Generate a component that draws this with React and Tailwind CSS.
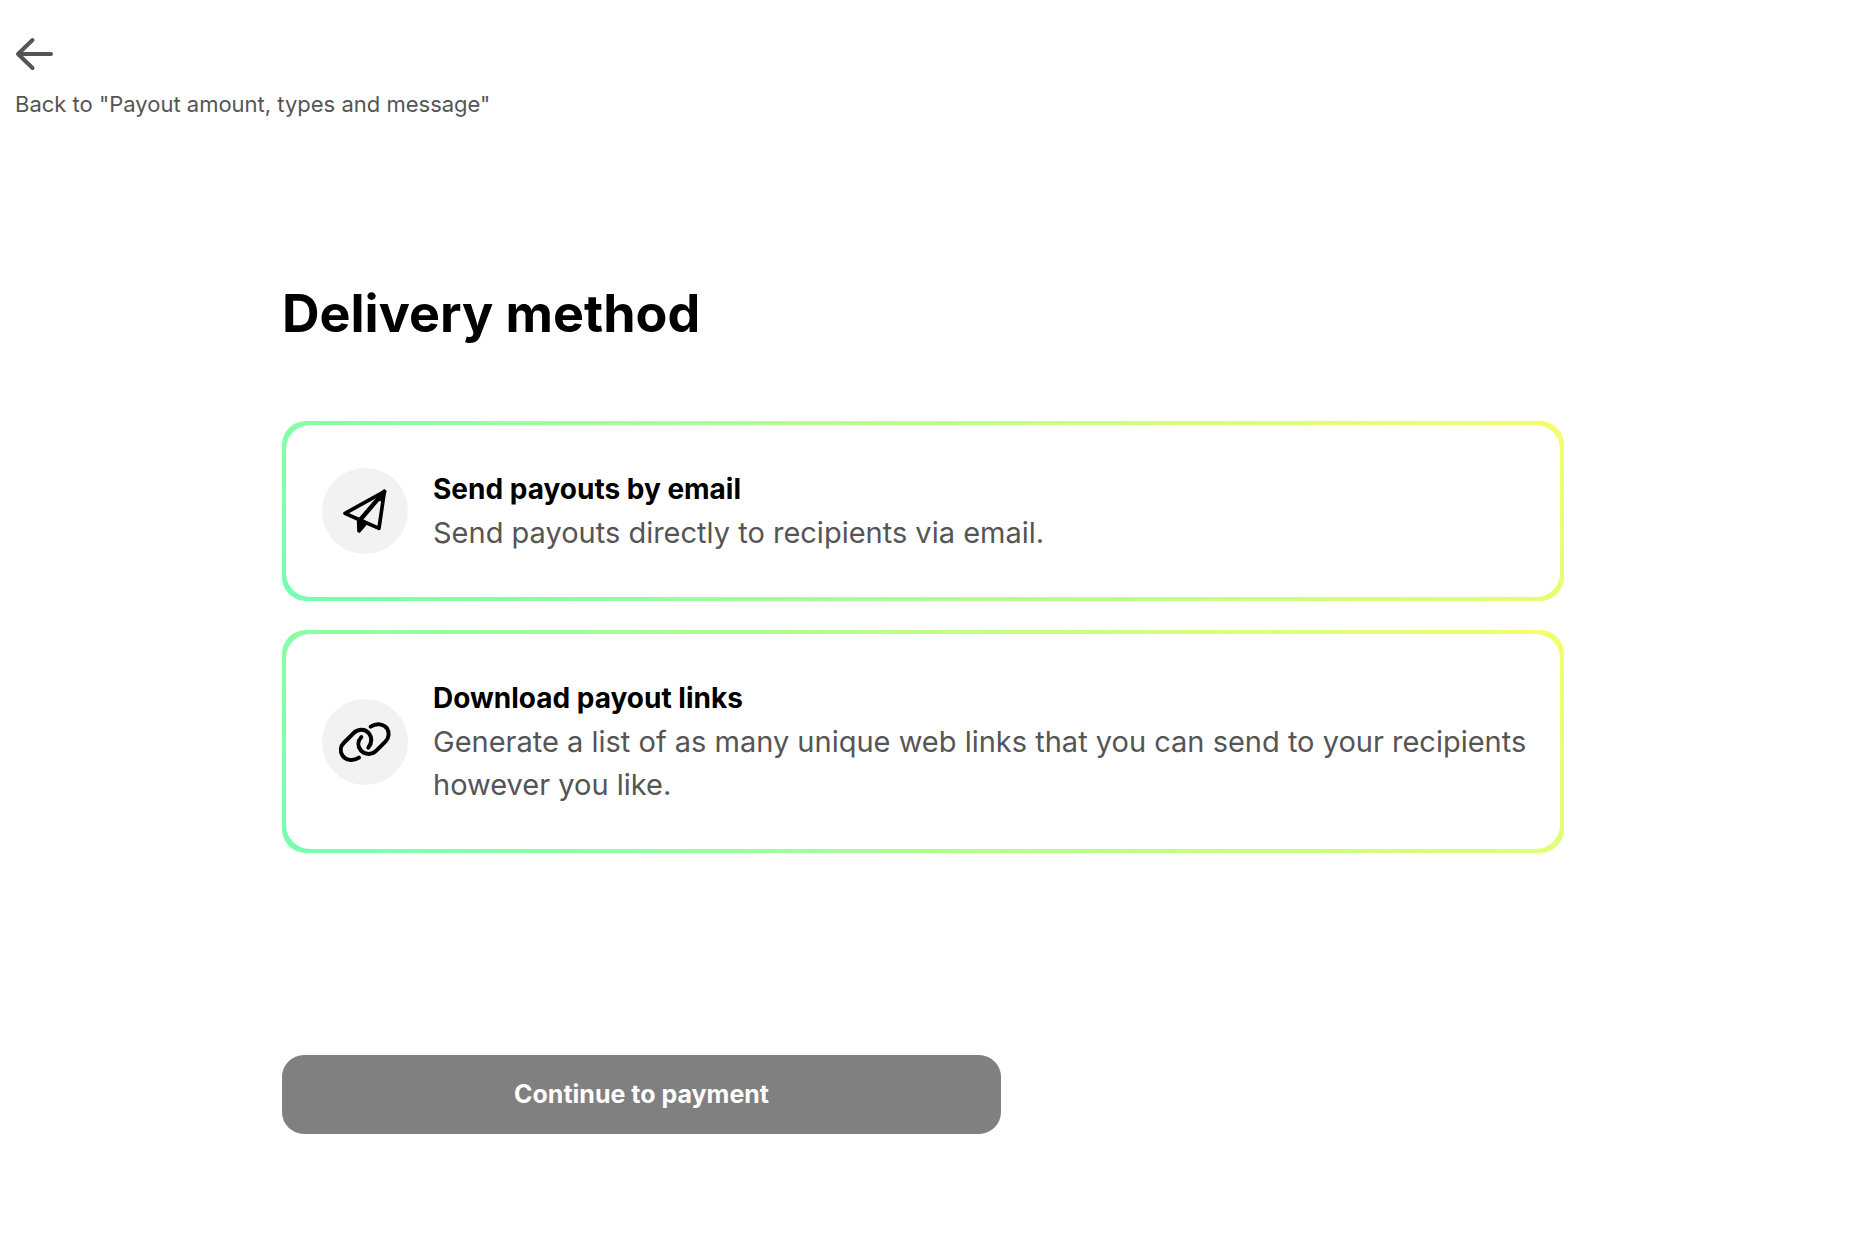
function ArrowLeftIcon() {
  return (
    <svg viewBox="0 0 38 34" className="h-[34px] w-[38px]" fill="none" stroke="currentColor" strokeWidth="4" strokeLinecap="round" strokeLinejoin="round" aria-hidden="true">
      <path d="M36 17H3M17.5 3L3 17L17.5 31" />
    </svg>
  );
}

function PlaneIcon() {
  return (
    <svg viewBox="37 24 258 258" className="size-full" fill="none" stroke="currentColor" strokeWidth="11" strokeLinecap="round" strokeLinejoin="round" aria-hidden="true">
      <path d="M106 160L224 95L208 205L151 180Z" />
      <path d="M224 95L151 180" strokeWidth="13" />
      <path d="M222 98L212 118L207 108Z" fill="currentColor" />
      <path d="M147 183L148 213L168 190Z" fill="currentColor" />
    </svg>
  );
}

function LinkIcon() {
  return (
    <svg viewBox="37 24 258 258" className="size-full" fill="none" stroke="currentColor" strokeWidth="12" strokeLinecap="round" strokeLinejoin="round" aria-hidden="true">
      <path d="M148 200C130 212 108 208 98 193C91 181 92 166 102 156L132 126C146 113 166 113 178 127C187 139 187 155 176 170" />
      <path d="M183 107C200 96 221 98 232 112C240 124 238 141 228 151L200 179C187 192 167 192 154 179C143 166 144 150 155 138" />
    </svg>
  );
}

function MethodCard({ icon, title, children }) {
  return (
    <button type="button" className="w-full rounded-3xl bg-[linear-gradient(45deg,#74ffb0,#f4ff6a)] p-1 text-left">
      <span className="flex items-center gap-[25px] rounded-3xl bg-white py-[43px] pr-6 pl-9">
        <span className="size-[86px] shrink-0 rounded-full bg-[#f2f2f2] text-black">{icon}</span>
        <span className="flex flex-col leading-[43px]">
          <span className="text-[28px] font-bold text-black">{title}</span>
          <span className="text-[29px] text-[#555555]">{children}</span>
        </span>
      </span>
    </button>
  );
}

export default function App() {
  return (
    <div className="min-h-screen bg-white font-['Inter',sans-serif]">
      <header className="px-[15px] pt-[37px]">
        <a href="#payout" className="inline-flex flex-col gap-[17px] text-[#555555]">
          <ArrowLeftIcon />
          <span className="text-[22px] leading-8">Back to "Payout amount, types and message"</span>
        </a>
      </header>
      <main className="flex flex-col pt-[164px] pr-[304px] pb-28 pl-[282px]">
        <h1 className="text-[52px] leading-[60px] font-bold text-black">Delivery method</h1>
        <div className="mt-[77px] flex flex-col gap-[29px]">
          <MethodCard icon={<PlaneIcon />} title="Send payouts by email">
            Send payouts directly to recipients via email.
          </MethodCard>
          <MethodCard icon={<LinkIcon />} title="Download payout links">
            Generate a list of as many unique web links that you can send to your recipients however you like.
          </MethodCard>
        </div>
        <button type="button" disabled className="mt-[202px] h-[79px] w-full max-w-[719px] rounded-[22px] bg-[#808080] text-[25px] font-bold text-white">
          Continue to payment
        </button>
      </main>
    </div>
  );
}
